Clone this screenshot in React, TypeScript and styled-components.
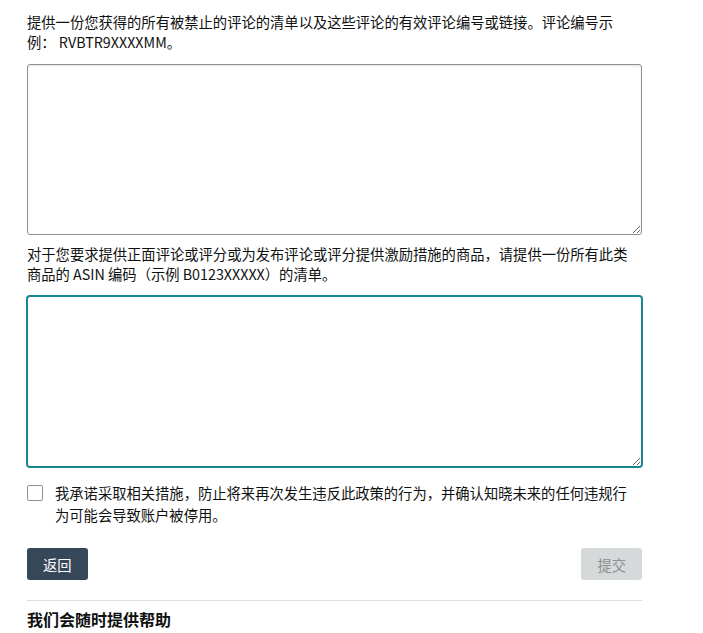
import React from "react";
import styled, { createGlobalStyle } from "styled-components";

const Global = createGlobalStyle`
  html, body { margin: 0; padding: 0; background: #ffffff; }
  body {
    font-family: "Noto Sans CJK SC", "Noto Sans", sans-serif;
    color: #0f1111;
  }
  * { box-sizing: border-box; }
`;

const Page = styled.div`
  width: 703px;
  height: 633px;
  overflow: hidden;
  padding: 12px 0 0 27px;
`;

const Form = styled.div`
  width: 615px;
  display: flex;
  flex-direction: column;
`;

const Label = styled.p<{ $gap: number }>`
  margin: 0 0 ${(p) => p.$gap}px 0;
  width: 608px;
  font-size: 14.3px;
  line-height: 20px;
  color: #0f1111;
`;

const TextArea = styled.textarea<{ $active?: boolean; $gap: number }>`
  display: block;
  width: 615px;
  height: 171px;
  margin: 0 0 ${(p) => p.$gap}px 0;
  border: 1px solid ${(p) => (p.$active ? "#1a8590" : "#8d9090")};
  box-shadow: ${(p) => (p.$active ? "0 0 0 1px #1a8590" : "inset 0 1px 2px rgba(15,17,17,0.12)")};
  border-radius: 3px;
  background: #fff;
  resize: vertical;
  font-family: inherit;
  font-size: 14px;
  outline: none;
`;

const CheckRow = styled.label`
  display: flex;
  align-items: flex-start;
  gap: 12px;
  margin-bottom: 22px;
`;

const Box = styled.span`
  flex: none;
  width: 16px;
  height: 16px;
  margin-top: 3px;
  border: 1px solid #8d9096;
  border-radius: 2px;
  background: #fff;
`;

const CheckText = styled.span`
  width: 580px;
  font-size: 14.3px;
  line-height: 22px;
  color: #0f1111;
`;

const Actions = styled.div`
  display: flex;
  justify-content: space-between;
  align-items: flex-start;
  padding-bottom: 20px;
  border-bottom: 1px solid #dddddd;
`;

const Button = styled.button<{ $variant: "dark" | "disabled" }>`
  height: 32px;
  padding: 0 16px;
  border: none;
  border-radius: 3px;
  font-family: inherit;
  font-size: 14.3px;
  background: ${(p) => (p.$variant === "dark" ? "#37475a" : "#d5d9d9")};
  color: ${(p) => (p.$variant === "dark" ? "#ffffff" : "#8b8f92")};
  cursor: ${(p) => (p.$variant === "dark" ? "pointer" : "default")};
`;

const Heading = styled.h3`
  margin: 6px 0 0 0;
  font-size: 16px;
  line-height: 24px;
  font-weight: 700;
  color: #0f1111;
`;

export default function App() {
  return (
    <>
      <Global />
      <Page>
        <Form>
          <Label $gap={12}>
            提供一份您获得的所有被禁止的评论的清单以及这些评论的有效评论编号或链接。评论编号示例： RVBTR9XXXXMM。
          </Label>
          <TextArea $gap={9} />
          <Label $gap={12}>
            对于您要求提供正面评论或评分或为发布评论或评分提供激励措施的商品，请提供一份所有此类商品的 ASIN 编码（示例 B0123XXXXX）的清单。
          </Label>
          <TextArea $active $gap={15} />
          <CheckRow>
            <Box />
            <CheckText>
              我承诺采取相关措施，防止将来再次发生违反此政策的行为，并确认知晓未来的任何违规行为可能会导致账户被停用。
            </CheckText>
          </CheckRow>
          <Actions>
            <Button $variant="dark">返回</Button>
            <Button $variant="disabled">提交</Button>
          </Actions>
          <Heading>我们会随时提供帮助</Heading>
        </Form>
      </Page>
    </>
  );
}
